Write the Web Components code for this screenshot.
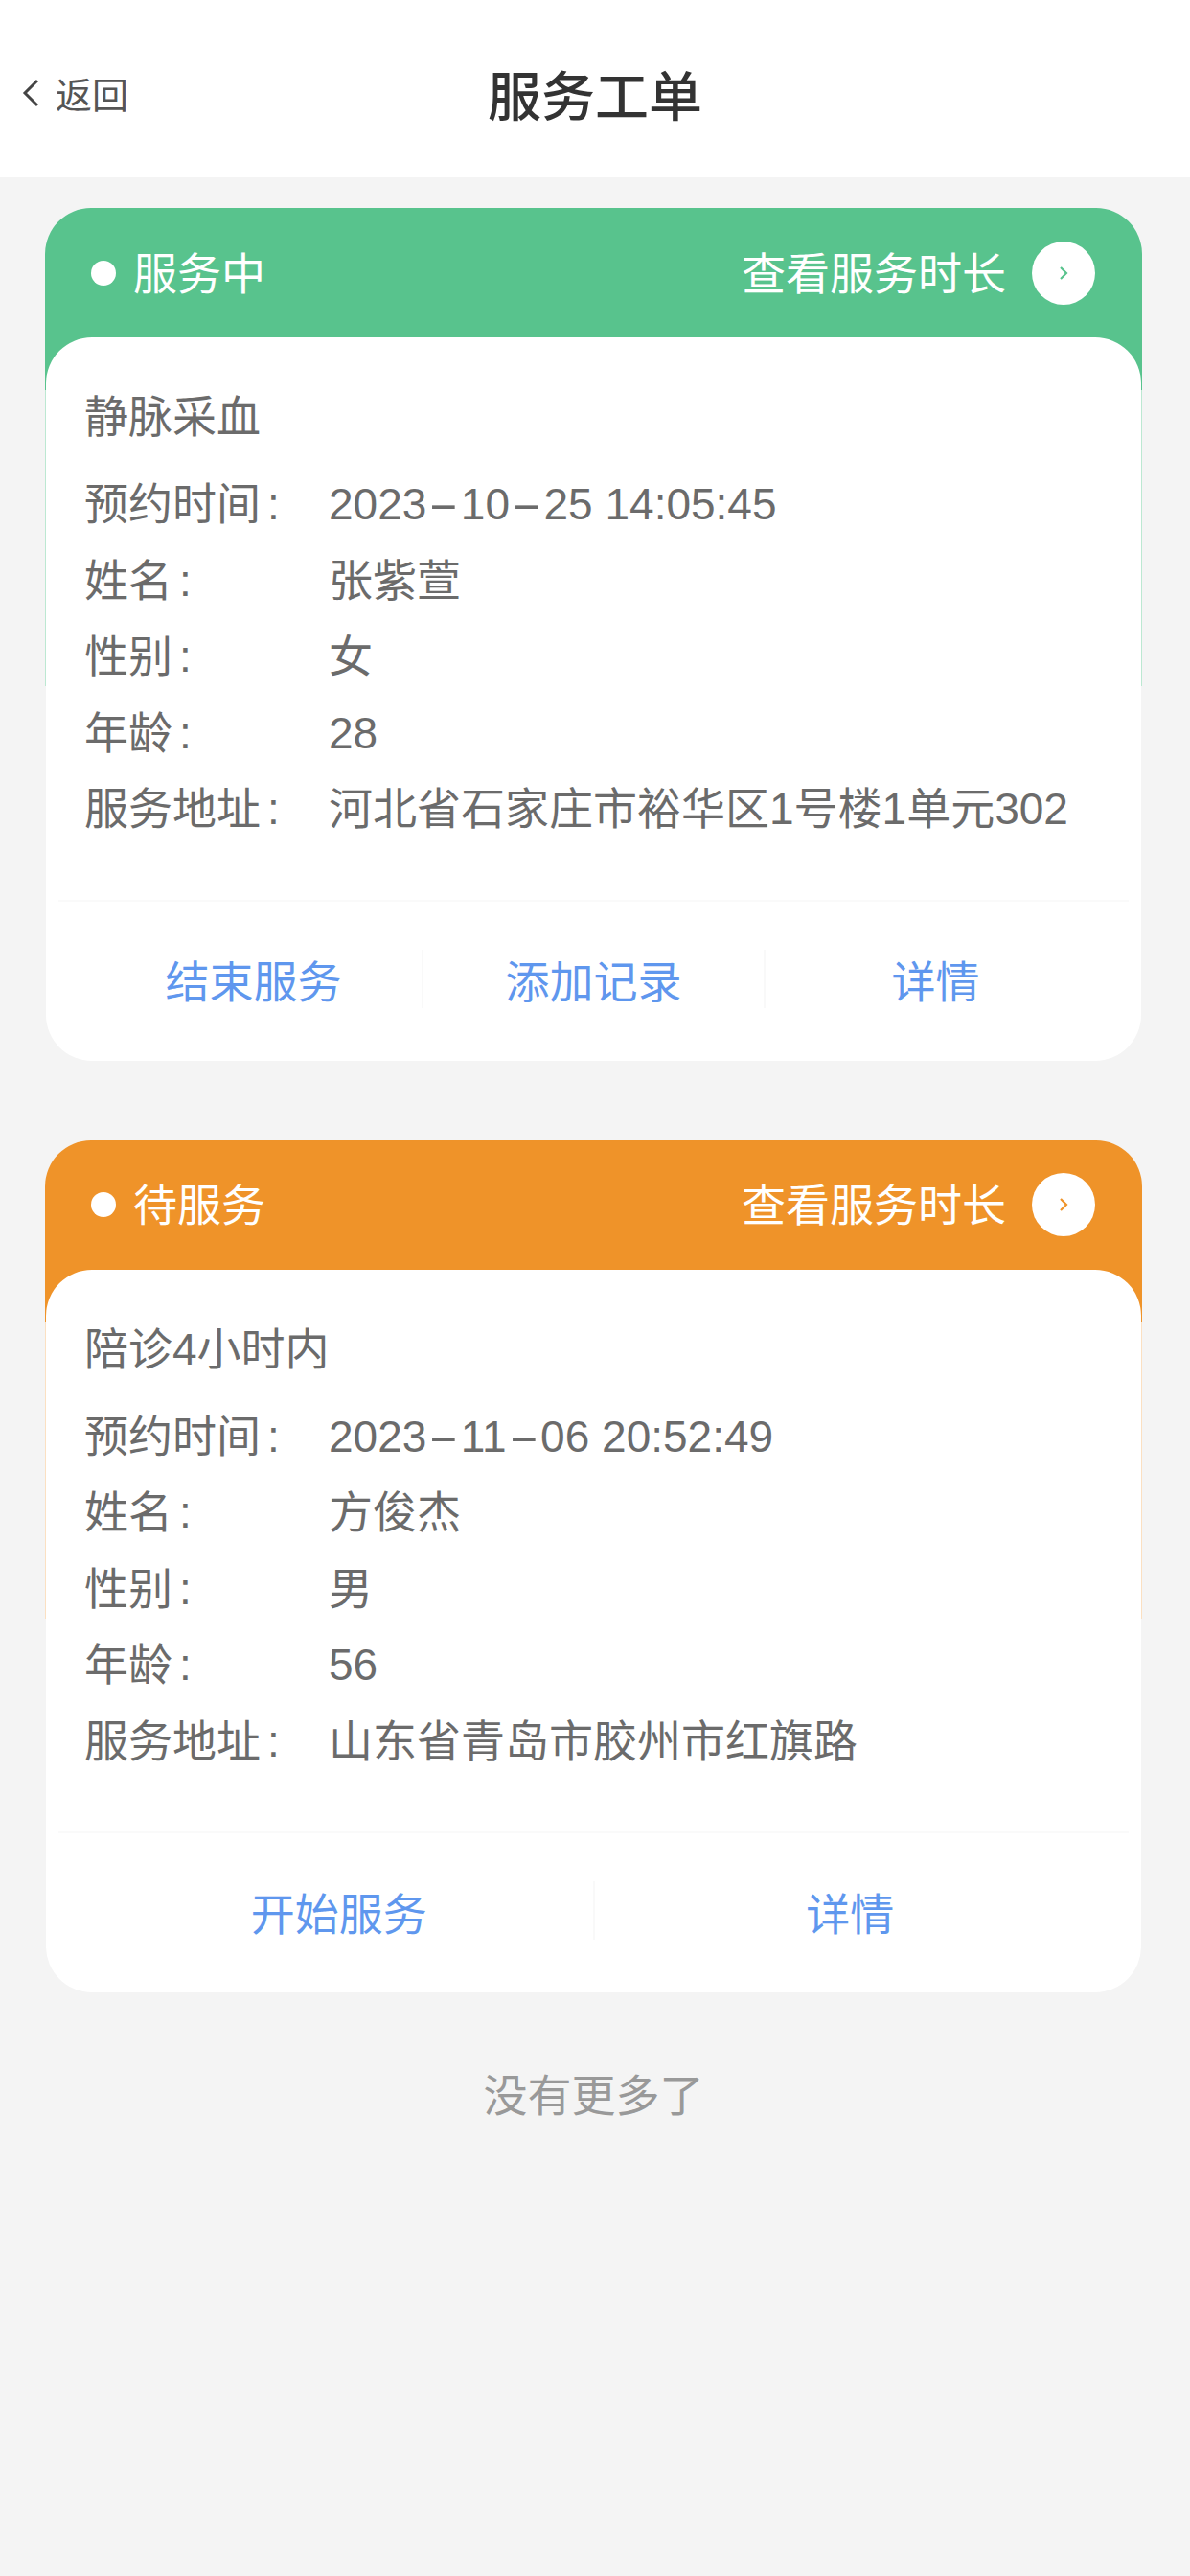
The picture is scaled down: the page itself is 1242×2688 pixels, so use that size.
<!DOCTYPE html>
<html lang="zh-CN">
<head>
<meta charset="utf-8">
<title>服务工单</title>
<style>
  html, body { margin: 0; background: #f4f4f4; }
  body { font-family: "Liberation Sans", "Noto Sans CJK SC", sans-serif; }
</style>
</head>
<body>
<order-page>
  <nav-bar slot="nav" back="返回">服务工单</nav-bar>

  <order-card status="服务中" link="查看服务时长" tone="#58c38d" tint="#bce8d2">
    <span slot="title">静脉采血</span>
    <info-row label="预约时间"><date-text>2023-10-25 14:05:45</date-text></info-row>
    <info-row label="姓名">张紫萱</info-row>
    <info-row label="性别">女</info-row>
    <info-row label="年龄">28</info-row>
    <info-row label="服务地址">河北省石家庄市裕华区1号楼1单元302</info-row>
    <card-action slot="actions">结束服务</card-action>
    <card-action slot="actions">添加记录</card-action>
    <card-action slot="actions">详情</card-action>
  </order-card>

  <order-card status="待服务" link="查看服务时长" tone="#ef9329" tint="#fbe0c2">
    <span slot="title">陪诊4小时内</span>
    <info-row label="预约时间"><date-text>2023-11-06 20:52:49</date-text></info-row>
    <info-row label="姓名">方俊杰</info-row>
    <info-row label="性别">男</info-row>
    <info-row label="年龄">56</info-row>
    <info-row label="服务地址">山东省青岛市胶州市红旗路</info-row>
    <card-action slot="actions">开始服务</card-action>
    <card-action slot="actions">详情</card-action>
  </order-card>

  <end-note>没有更多了</end-note>
</order-page>

<script>
// pagina completa: barra arriba y lista de tarjetas debajo
class OrderPage extends HTMLElement {
  constructor() {
    super();
    this.attachShadow({ mode: "open" });
    this.shadowRoot.innerHTML = `
      <style>
        :host { display: block; min-height: 2688px; background: #f4f4f4; }
        .list { display: flex; flex-direction: column; gap: 83px; padding: 32px 50px 0 47px; }
      </style>
      <slot name="nav"></slot>
      <div class="list"><slot></slot></div>
    `;
  }
}

class NavBar extends HTMLElement {
  constructor() {
    super();
    this.attachShadow({ mode: "open" });
  }

  connectedCallback() {
    const back = this.getAttribute("back") ?? "";
    this.shadowRoot.innerHTML = `
      <style>
        :host { display: grid; grid-template-columns: 1fr auto 1fr; align-items: center; box-sizing: border-box; height: 185px; padding-top: 8px; background: #fff; }
        .back { display: flex; align-items: center; gap: 16px; padding: 0 0 0 23px; font-size: 38px; color: #555; }
        svg { width: 19px; height: 30px; }
        h1 { margin: 0; font-size: 56px; font-weight: 500; color: #333; }
      </style>
      <div class="back">
        <svg viewBox="0 0 19 30" fill="none" stroke="#444" stroke-width="3"><path d="M16 2 3 15l13 13"/></svg>
        <span>${back}</span>
      </div>
      <h1><slot></slot></h1>
    `;
  }
}

class OrderCard extends HTMLElement {
  constructor() {
    super();
    this.attachShadow({ mode: "open" });
  }

  connectedCallback() {
    const status = this.getAttribute("status") ?? "";
    const link = this.getAttribute("link") ?? "";
    const tone = this.getAttribute("tone") ?? "#58c38d";
    const tint = this.getAttribute("tint") ?? "#bce8d2";
    this.shadowRoot.innerHTML = `
      <style>
        :host { display: block; position: relative; }
        /* fondo de color que queda detras del cuerpo blanco y asoma por los lados */
        .back {
          position: absolute; left: 0; right: 0; top: 0; height: 499px;
          border-radius: 48px 48px 0 0;
          background: linear-gradient(${tone} 190px, ${tint} 190px);
        }
        header {
          position: relative; display: flex; align-items: center; justify-content: space-between;
          height: 135px; padding: 0 49px 0 48px; font-size: 46px; color: #fff;
        }
        .status, .link { display: flex; align-items: center; }
        .status span, .link span { padding-bottom: 6px; }
        .dot { width: 26px; height: 26px; margin-right: 18px; border-radius: 50%; background: #fff; }
        .go { display: flex; align-items: center; justify-content: center; width: 66px; height: 66px; margin-left: 27px; border-radius: 50%; background: #fff; }
        .go svg { width: 12px; height: 18px; }
        .body { position: relative; margin: 0 1px; background: #fff; border-radius: 48px; }
        .info { padding: 43px 40px 55px 40px; font-size: 46px; color: #6b6b6b; }
        .title { height: 80px; line-height: 80px; margin-bottom: 11px; }
        .actions { display: flex; margin: 0 13px; padding: 50px 24px 55px; border-top: 2px solid #fafafa; }
      </style>
      <div class="back"></div>
      <header>
        <div class="status"><i class="dot"></i><span>${status}</span></div>
        <div class="link">
          <span>${link}</span>
          <i class="go"><svg viewBox="0 0 12 18" fill="none" stroke="${tone}" stroke-width="2.2"><path d="M3 3l6 6-6 6"/></svg></i>
        </div>
      </header>
      <div class="body">
        <div class="info">
          <div class="title"><slot name="title"></slot></div>
          <slot></slot>
        </div>
        <div class="actions"><slot name="actions"></slot></div>
      </div>
    `;
  }
}

class InfoRow extends HTMLElement {
  constructor() {
    super();
    this.attachShadow({ mode: "open" });
  }

  connectedCallback() {
    const label = this.getAttribute("label") ?? "";
    this.shadowRoot.innerHTML = `
      <style>
        :host { display: flex; height: 79.5px; line-height: 80px; white-space: nowrap; }
        .label { flex: 0 0 255px; }
        .colon { margin-left: 7px; }
      </style>
      <span class="label">${label}<span class="colon">:</span></span>
      <span><slot></slot></span>
    `;
  }
}

// el guion de la fecha es mas ancho que el de la fuente
class DateText extends HTMLElement {
  constructor() {
    super();
    this.attachShadow({ mode: "open" });
  }

  connectedCallback() {
    const parts = this.textContent.split("-");
    this.shadowRoot.innerHTML = `
      <style>
        .dash { display: inline-block; width: 35.5px; text-align: center; transform: scaleX(2.1); }
      </style>
      ${parts.join('<span class="dash">-</span>')}
    `;
  }
}

class CardAction extends HTMLElement {
  constructor() {
    super();
    this.attachShadow({ mode: "open" });
    this.shadowRoot.innerHTML = `
      <style>
        :host { flex: 1; display: flex; align-items: center; justify-content: center; height: 61px; font-size: 46px; color: #5f97ee; }
        :host(:not(:first-of-type)) { border-left: 2px solid #f9f9f9; }
        :host(:first-of-type) span { padding-left: 4px; }
      </style>
      <span><slot></slot></span>
    `;
  }
}

class EndNote extends HTMLElement {
  constructor() {
    super();
    this.attachShadow({ mode: "open" });
    this.shadowRoot.innerHTML = `
      <style>
        :host { display: block; height: 80px; line-height: 80px; margin-top: -15px; text-align: center; font-size: 46px; color: #999; }
      </style>
      <slot></slot>
    `;
  }
}

customElements.define("order-page", OrderPage);
customElements.define("nav-bar", NavBar);
customElements.define("order-card", OrderCard);
customElements.define("info-row", InfoRow);
customElements.define("date-text", DateText);
customElements.define("card-action", CardAction);
customElements.define("end-note", EndNote);
</script>
</body>
</html>
